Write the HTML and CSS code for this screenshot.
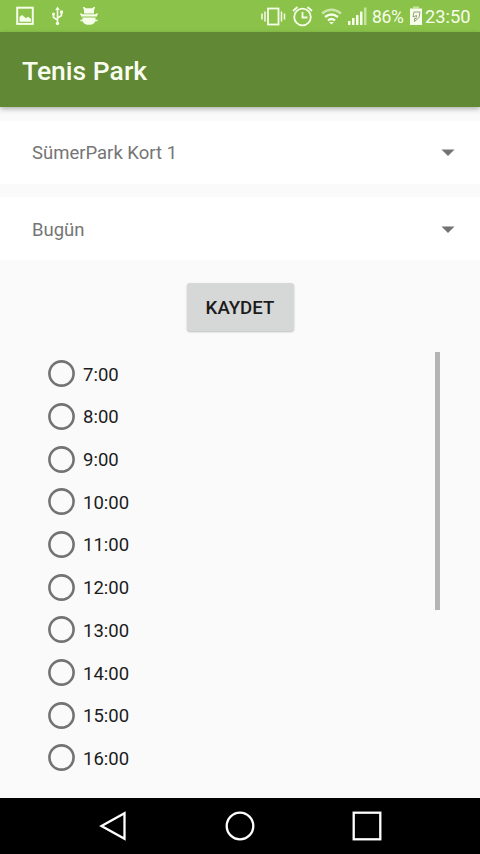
FILE: index.html
```html
<!DOCTYPE html>
<html lang="tr">
<head>
<meta charset="utf-8">
<title>Tenis Park</title>
<link rel="stylesheet" href="styles.css">
</head>
<body>
<div class="status">
  <svg class="notifications" width="84" height="20" viewBox="0 0 84 20">
    <rect x="1.2" y="1.7" width="15.6" height="16.2" fill="none" stroke="#f6fde9" stroke-width="2"/>
    <path d="M3.500 15.800V11l2.500-2 4 3.200 2-1.500 3 2.300v2.800z" fill="#f6fde9"/>
    <g fill="none" stroke="#f6fde9" stroke-width="1.600"><path d="M41.500 3v15M41.500 14l-4-2.500V8.500M41.500 12l4-2.500V6"/></g>
    <path d="M39.200 4l2.300-3.500L43.800 4z" fill="#f6fde9"/><circle cx="41.500" cy="17.500" r="1.700" fill="#f6fde9"/><circle cx="37.500" cy="8" r="1.500" fill="#f6fde9"/><path d="M44 4.500h3v3h-3z" fill="#f6fde9"/>
    <path d="M68 7.500V4l-1.200-2.700.9-.6L70 2.300h6L78.300.7l.9.600L78 4v3.500zM65 8.300h16v2.200H65zM66.500 11.500h13v2c0 3.500-2.500 5.300-6.500 5.300s-6.500-1.800-6.500-5.300z" fill="#f6fde9"/>
    <path d="M64.500 7.500l1.500 2M81.500 7.500l-1.500 2M64.500 14.500h3M81.500 14.500h-3" stroke="#f6fde9" stroke-width="1.500"/>
  </svg>
  <div class="system">
    <svg width="108" height="24" viewBox="0 0 108 24">
      <g fill="none" stroke="#f6fde9" stroke-width="1.800">
        <rect x="8" y="4.500" width="10.500" height="16"/>
        <path d="M5 7.500v10M2 9.500v6M21.500 7.500v10M24.500 9.500v6" stroke-width="1.500"/>
        <circle cx="42.500" cy="13" r="8.300"/>
        <path d="M42.500 8v5.500h5M33 7l4.500-4M52 7l-4.500-4"/>
      </g>
      <g fill="none" stroke="#f6fde9" stroke-width="2.300">
        <path d="M62 9.500q9.500-7.500 19 0" opacity=".6"/>
        <path d="M65 13q6.500-5 13 0M68 16.500q3.500-3 7 0"/>
      </g>
      <path d="M69 18h5l-2.500 2.500z" fill="#f6fde9"/>
      <path d="M88 17h2.500v4H88zM92 14h2.500v7H92zM96 11h2.500v10H96zM100 7.500h2.500V21H100z" fill="#f6fde9"/>
      <path d="M104 3.500h2.500V21H104z" fill="#c5e49d"/>
    </svg>
    <span class="percent">86%</span>
    <svg class="battery" width="12" height="20" viewBox="0 0 12 20">
      <path d="M3 .500h6v2H3z" fill="#c5e49d"/><path d="M0 2.500h12V19H0z" fill="#f6fde9"/>
      <path d="M4 6h6l-1 5.500-4.500 4V12.500h1.500l.5-3L3 11z" fill="none" stroke="#8a9475" stroke-width=".9"/>
    </svg>
    <span class="clock">23:50</span>
  </div>
</div>
<header class="appbar"><h1>Tenis Park</h1></header>
<main>
  <div class="spinner"><span>SümerPark Kort 1</span><svg width="14" height="8" viewBox="0 0 14 8"><path d="M.5.500h13L7 7z"/></svg></div>
  <div class="spinner"><span>Bugün</span><svg width="14" height="8" viewBox="0 0 14 8"><path d="M.5.500h13L7 7z"/></svg></div>
  <button class="save">KAYDET</button>
  <div class="list">
    <div class="hours">
      <label><svg width="27" height="27" viewBox="0 0 27 27"><circle cx="13.500" cy="13.500" r="12.100"/></svg><span>7:00</span></label>
      <label><svg width="27" height="27" viewBox="0 0 27 27"><circle cx="13.500" cy="13.500" r="12.100"/></svg><span>8:00</span></label>
      <label><svg width="27" height="27" viewBox="0 0 27 27"><circle cx="13.500" cy="13.500" r="12.100"/></svg><span>9:00</span></label>
      <label><svg width="27" height="27" viewBox="0 0 27 27"><circle cx="13.500" cy="13.500" r="12.100"/></svg><span>10:00</span></label>
      <label><svg width="27" height="27" viewBox="0 0 27 27"><circle cx="13.500" cy="13.500" r="12.100"/></svg><span>11:00</span></label>
      <label><svg width="27" height="27" viewBox="0 0 27 27"><circle cx="13.500" cy="13.500" r="12.100"/></svg><span>12:00</span></label>
      <label><svg width="27" height="27" viewBox="0 0 27 27"><circle cx="13.500" cy="13.500" r="12.100"/></svg><span>13:00</span></label>
      <label><svg width="27" height="27" viewBox="0 0 27 27"><circle cx="13.500" cy="13.500" r="12.100"/></svg><span>14:00</span></label>
      <label><svg width="27" height="27" viewBox="0 0 27 27"><circle cx="13.500" cy="13.500" r="12.100"/></svg><span>15:00</span></label>
      <label><svg width="27" height="27" viewBox="0 0 27 27"><circle cx="13.500" cy="13.500" r="12.100"/></svg><span>16:00</span></label>
    </div>
    <div class="scrollbar"></div>
  </div>
</main>
<nav>
  <svg width="30" height="30" viewBox="0 0 30 30"><path d="M3.500 15L26.500 2.300v25.400z"/></svg>
  <svg width="30" height="30" viewBox="0 0 30 30"><circle cx="15" cy="15" r="13.300"/></svg>
  <svg width="30" height="30" viewBox="0 0 30 30"><rect x="1.700" y="1.700" width="26.600" height="26.600"/></svg>
</nav>
</body>
</html>
```
FILE: styles.css
```css
* { box-sizing: border-box; }
body {
  margin: 0;
  width: 480px;
  height: 854px;
  display: flex;
  flex-direction: column;
  overflow: hidden;
  background: #fafafa;
  font-family: Roboto, "Liberation Sans", sans-serif;
  font-size: 18.5px;
}
svg { display: block; flex: none; }
.status {
  height: 32px;
  flex: none;
  display: flex;
  align-items: center;
  justify-content: space-between;
  padding: 0 10px 0 16px;
  background: #8bc34a;
  color: #f6fde9;
}
.system { display: flex; align-items: center; }
.percent { margin-left: 4px; width: 38px; font-size: 17.5px; letter-spacing: -0.3px; line-height: 32px; padding-top: 1px; }
.clock { margin-left: 3px; width: 45px; font-size: 18.3px; line-height: 32px; padding-top: 1px; }
.appbar {
  height: 75px;
  flex: none;
  display: flex;
  align-items: center;
  padding: 2px 22px 0;
  background: #618834;
  box-shadow: 0 2px 5px rgba(0, 0, 0, .3);
}
h1 { margin: 0; font-size: 26.5px; font-weight: 500; color: #f8fdf0; }
main { flex: 1; display: flex; flex-direction: column; padding-top: 14px; min-height: 0; }
.spinner {
  height: 63px;
  flex: none;
  margin-bottom: 13px;
  padding: 0 25px 0 32px;
  display: flex;
  align-items: center;
  justify-content: space-between;
  background: #fff;
  color: #757575;
}
.spinner:nth-child(2) { margin-bottom: 23px; padding-top: 3px; }
.spinner path { fill: #737373; }
.save {
  align-self: center;
  width: 107px;
  height: 48px;
  flex: none;
  padding: 1px 0 0;
  border: 0;
  border-radius: 3px;
  background: #d6d7d7;
  box-shadow: 0 1px 2px rgba(0, 0, 0, .25);
  color: #1c1c1c;
  font: 500 18.67px Roboto, sans-serif;
}
.list {
  display: flex;
  justify-content: space-between;
  margin: 21px 40px 0;
}
.hours { padding: 0.4px 0 0 8px; }
label { display: flex; align-items: center; height: 42.7px; gap: 8px; color: #1c1c1c; }
label span { padding-top: 2px; }
label circle { fill: none; stroke: #737373; stroke-width: 2.6; }
.scrollbar { width: 5px; height: 258px; background: #b5b5b5; }
nav {
  height: 56px;
  flex: none;
  display: flex;
  justify-content: space-between;
  align-items: center;
  padding: 0 98px;
  background: #000;
}
nav path, nav circle, nav rect { fill: none; stroke: #fff; stroke-width: 2.3; }
```
